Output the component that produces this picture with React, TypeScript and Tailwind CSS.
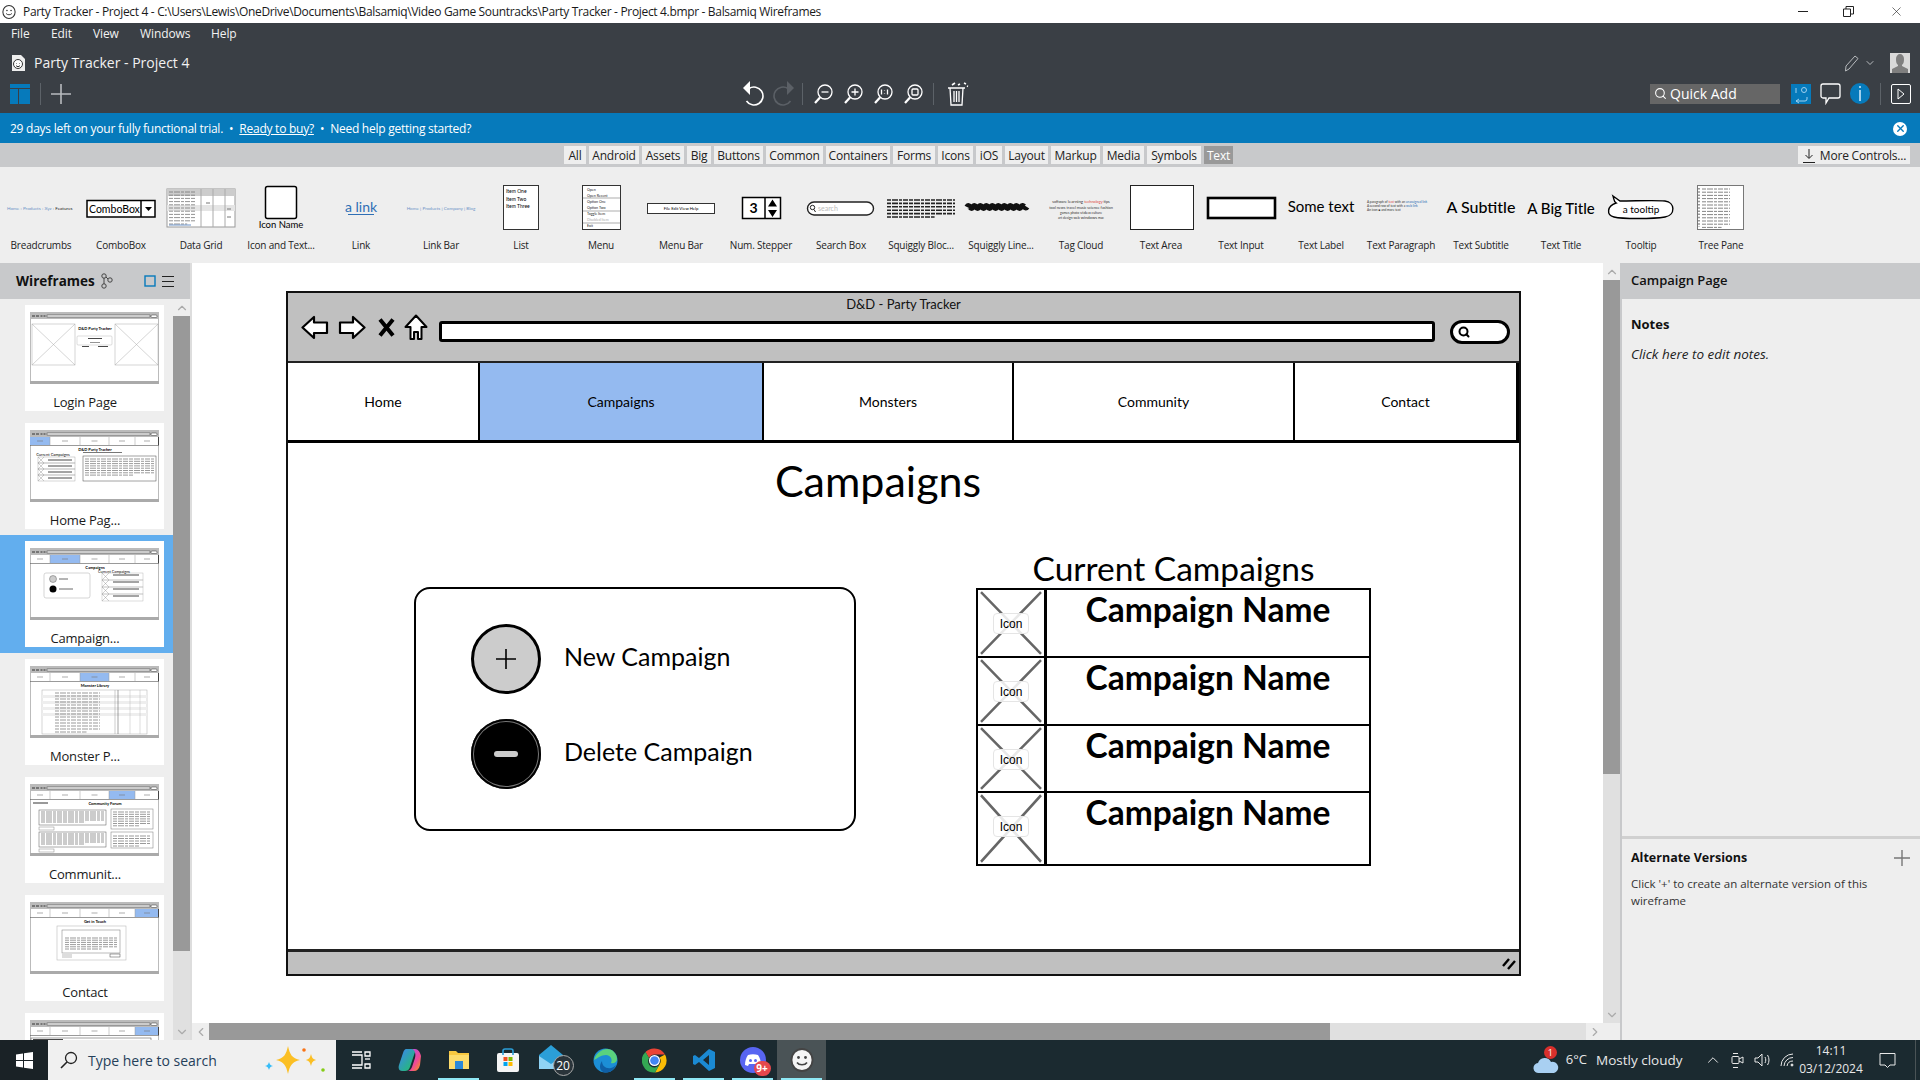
import type { ReactNode } from "react";
import { ChevronDown, ChevronLeft, ChevronRight, ChevronUp, Search, X } from "lucide-react";

const tabs = [
  { label: "All", w: "w-[22px]" },
  { label: "Android", w: "w-[50px]" },
  { label: "Assets", w: "w-[42px]" },
  { label: "Big", w: "w-[24px]" },
  { label: "Buttons", w: "w-[49px]" },
  { label: "Common", w: "w-[57px]" },
  { label: "Containers", w: "w-[64px]" },
  { label: "Forms", w: "w-[42px]" },
  { label: "Icons", w: "w-[35px]" },
  { label: "iOS", w: "w-[26px]" },
  { label: "Layout", w: "w-[43px]" },
  { label: "Markup", w: "w-[49px]" },
  { label: "Media", w: "w-[41px]" },
  { label: "Symbols", w: "w-[54px]" },
];

const library = [
  "Breadcrumbs", "ComboBox", "Data Grid", "Icon and Text...", "Link", "Link Bar", "List", "Menu", "Menu Bar", "Num. Stepper", "Search Box",
  "Squiggly Bloc...", "Squiggly Line...", "Tag Cloud", "Text Area", "Text Input", "Text Label", "Text Paragraph", "Text Subtitle", "Text Title", "Tooltip", "Tree Pane",
];

// the seventh page is cut off by the taskbar before its name shows
const pages = ["Login Page", "Home Pag...", "Campaign...", "Monster P...", "Communit...", "Contact", ""];

function Dashes({ x, y, w, n = 5, gap = 3, h = 1, color = "#333" }: { x: number; y: number; w: number; n?: number; gap?: number; h?: number; color?: string }) {
  return (
    <g>
      {Array.from({ length: n }, (_, i) => (
        <line key={i} x1={x} x2={i === n - 1 ? x + w * 0.7 : x + w} y1={y + i * gap} y2={y + i * gap} stroke={color} strokeWidth={h} strokeDasharray="4 1 6 1 3 1 5 1" />
      ))}
    </g>
  );
}

function LibraryPreview({ index }: { index: number }) {
  const f = { fontFamily: "Lato, sans-serif" };
  switch (index) {
    case 0:
      return (
        <text x="6" y="43" fontSize="4.6" fill="#6d93c7" style={f}>
          Home › Products › Xyz › <tspan fill="#222">Features</tspan>
        </text>
      );
    case 1:
      return (
        <g>
          <rect x="6" y="33.5" width="68" height="16.5" fill="white" stroke="black" strokeWidth="1.5" />
          <line x1="60" x2="60" y1="33" y2="50" stroke="black" strokeWidth="1.5" />
          <path d="M64 40h7l-3.5 4z" />
          <text x="8" y="45.5" fontSize="10.5" style={f}>ComboBox</text>
        </g>
      );
    case 2:
      return (
        <g>
          <rect x="6" y="22" width="68" height="38" fill="#fff" stroke="#999" />
          <rect x="6" y="38" width="68" height="6" fill="#e5e5e5" />
          <rect x="6" y="22" width="68" height="7" fill="#ccc" />
          <Dashes x={8} y={25} w={26} n={11} gap={3.2} color="#777" h={0.8} />
          {[40, 52, 64].map((x) => <line key={x} x1={x} x2={x} y1="22" y2="60" stroke="#aaa" />)}
          <line x1="45" x2="49" y1="36" y2="36" stroke="#777" />
          <line x1="66" x2="70" y1="42" y2="42" stroke="#777" />
          <line x1="66" x2="70" y1="50" y2="50" stroke="#777" />
          <line x1="8" x2="30" y1="58" y2="58" stroke="#6d93c7" />
        </g>
      );
    case 3:
      return (
        <g>
          <rect x="24.5" y="19.5" width="31" height="32" rx="2" fill="white" stroke="black" strokeWidth="1.5" />
          <text x="40" y="61" textAnchor="middle" fontSize="9.5" style={f}>Icon Name</text>
        </g>
      );
    case 4:
      return (
        <g>
          <text x="40" y="45" textAnchor="middle" fontSize="14" fill="#2f6fb5" style={f}>a link</text>
          <line x1="27" x2="53" y1="47.5" y2="47.5" stroke="#2f6fb5" />
        </g>
      );
    case 5:
      return (
        <text x="40" y="43" textAnchor="middle" fontSize="4.6" fill="#6d93c7" style={f}>
          Home | Products | Company | Blog
        </text>
      );
    case 6:
      return (
        <g>
          <rect x="22.5" y="18.5" width="35" height="44" fill="white" stroke="#333" />
          <text x="25" y="26" fontSize="5" style={f}>Item One</text>
          <text x="25" y="33.5" fontSize="5" style={f}>Item Two</text>
          <text x="25" y="41" fontSize="5" style={f}>Item Three</text>
        </g>
      );
    case 7:
      return (
        <g>
          <rect x="21.5" y="18.5" width="38" height="44" fill="white" stroke="#333" />
          {["Open", "Open Recent", "Option One", "Option Two", "Toggle Item", "Disabled Item", "Exit"].map((t, i) => (
            <text key={t} x="26" y={23.5 + i * 6} fontSize="3.6" fill={i === 5 ? "#aaa" : "#222"} style={f}>{t}</text>
          ))}
          <line x1="22" x2="59" y1="31" y2="31" stroke="#777" strokeWidth="0.6" />
          <line x1="22" x2="59" y1="44" y2="44" stroke="#777" strokeWidth="0.6" />
          <line x1="22" x2="59" y1="56" y2="56" stroke="#777" strokeWidth="0.6" />
        </g>
      );
    case 8:
      return (
        <g>
          <rect x="6.5" y="36.5" width="67" height="10" fill="white" stroke="#333" />
          <text x="40" y="43" textAnchor="middle" fontSize="4.2" style={f}>File   Edit   View   Help</text>
        </g>
      );
    case 9:
      return (
        <g>
          <rect x="21.5" y="30.5" width="38" height="21" fill="white" stroke="black" strokeWidth="1.5" />
          <line x1="44" x2="44" y1="30" y2="52" stroke="black" strokeWidth="1.5" />
          <text x="32.5" y="46" textAnchor="middle" fontSize="14" fontWeight="700" style={f}>3</text>
          <path d="M51.5 32.5l4.5 7h-9zM51.5 50l4.5-7h-9z" />
        </g>
      );
    case 10:
      return (
        <g>
          <rect x="6.5" y="35" width="66" height="13" rx="6.5" fill="white" stroke="#222" strokeWidth="1.4" />
          <circle cx="11.5" cy="40.5" r="2.2" fill="none" stroke="#222" />
          <line x1="13" x2="14.5" y1="42.5" y2="45" stroke="#222" />
          <text x="17" y="43.5" fontSize="7" fill="#bbb" style={f}>search</text>
        </g>
      );
    case 11:
      return <Dashes x={6} y={33} w={68} n={6} gap={3.4} h={1.6} color="#222" />;
    case 12:
      return <path d="M6 40c2-4 4 4 6 0s4 4 6 0 4 4 6 0 4 4 6 0 4 4 6 0 4 4 6 0 4 4 6 0 4 4 6 0 4 4 6 0 4 3 6 0" fill="none" stroke="#111" strokeWidth="5.500" />;
    case 13:
      return (
        <g fill="#333" style={f}>
          <text x="40" y="36" textAnchor="middle" fontSize="3.8">software <tspan fontSize="4.4">learning</tspan> <tspan fill="#d44">technology</tspan> tips</text>
          <text x="40" y="42" textAnchor="middle" fontSize="3.8">tool news travel music science fashion</text>
          <text x="40" y="47" textAnchor="middle" fontSize="3.4">games photo <tspan fontSize="4.4">video</tspan> culture</text>
          <text x="40" y="52" textAnchor="middle" fontSize="3.4">art design web <tspan fontSize="4.2">windows</tspan> mac</text>
        </g>
      );
    case 14:
      return <rect x="9.5" y="18.5" width="63" height="44" fill="white" stroke="#222" />;
    case 15:
      return <rect x="7" y="31" width="67" height="20" fill="white" stroke="black" strokeWidth="2.6" />;
    case 16:
      return <text x="40" y="45" textAnchor="middle" fontSize="15" style={f}>Some text</text>;
    case 17:
      return (
        <g fill="#333" style={f} fontSize="3.2">
          <text x="6" y="36">A paragraph of <tspan fill="#d44">text</tspan> with an <tspan fill="#2f6fb5">unassigned link</tspan></text>
          <text x="6" y="40">A second row of text with a <tspan fill="#2f6fb5">web link</tspan></text>
          <text x="6" y="44">An icon ■ and more text</text>
        </g>
      );
    case 18:
      return <text x="40" y="45.500" textAnchor="middle" fontSize="16" fontWeight="500" style={f}>A Subtitle</text>;
    case 19:
      return <text x="40" y="46.500" textAnchor="middle" fontSize="15" fontWeight="500" style={f}>A Big Title</text>;
    case 20:
      return (
        <g>
          <path d="M15 36c-2-1-2-4-3-7l7 5c15 0 35-1 45 0 10 1 11 14 0 16-12 2-43 2-51 0-8-2-7-11 2-14z" fill="white" stroke="black" strokeWidth="1.4" />
          <text x="40" y="46" textAnchor="middle" fontSize="10" style={f}>a tooltip</text>
        </g>
      );
    default:
      return (
        <g>
          <rect x="16.5" y="18.5" width="46" height="44" fill="white" stroke="#777" />
          <Dashes x={21} y={22} w={28} n={13} gap={3.2} h={0.8} color="#666" />
          <line x1="18" x2="18" y1="21" y2="60" stroke="#999" strokeDasharray="1.5 1.7" strokeWidth="2" />
        </g>
      );
  }
}

function ThumbLines({ x, y, w, n, gap = 2 }: { x: number; y: number; w: number; n: number; gap?: number }) {
  return <Dashes x={x} y={y} w={w} n={n} gap={gap} h={0.6} color="#555" />;
}

function PageThumb({ index }: { index: number }) {
  const active = index === 0 ? -1 : index === 1 ? 0 : index === 2 ? 1 : index === 3 ? 2 : index === 4 ? 3 : 4;
  const cols = [0, 20, 50, 79, 105, 129];
  const f = { fontFamily: "Lato, sans-serif" };
  return (
    <svg viewBox="0 0 129 72" className="w-[129px] h-[72px] block mx-auto">
      <rect width="129" height="72" fill="white" />
      <rect width="129" height="7" fill="#bbb" />
      <rect x="17" y="3" width="103" height="2" fill="white" stroke="#333" strokeWidth="0.5" />
      <rect x="121" y="3" width="6" height="2.5" rx="1" fill="white" stroke="#333" strokeWidth="0.5" />
      <path d="M2 4h3M6 4h3M10.5 4h2M13.5 4h2" stroke="#333" />
      <rect y="69" width="129" height="3" fill="#aaa" />
      <path d="M.5 7V69M128.5 7V69" stroke="#bbb" />
      {active >= 0 && (
        <g>
          <rect x={cols[active]} y="7" width={cols[active + 1] - cols[active]} height="8" fill="#94baf0" />
          {cols.slice(1, 5).map((x) => <line key={x} x1={x} x2={x} y1="7" y2="15" stroke="#999" strokeWidth="0.5" />)}
          <line x2="129" y1="15.5" y2="15.5" stroke="#555" strokeWidth="0.6" />
          <line x1="128.5" x2="128.5" y1="7" y2="15" stroke="#444" />
          {cols.slice(0, 5).map((x, i) => <line key={x} x1={(x + cols[i + 1]) / 2 - 3} x2={(x + cols[i + 1]) / 2 + 3} y1="11" y2="11" stroke="#777" strokeWidth="0.6" />)}
        </g>
      )}
      {index === 0 && (
        <g>
          {[2, 85].map((x) => (
            <g key={x} stroke="#aaa" strokeWidth="0.5" fill="none">
              <rect x={x} y="12" width="43" height="41" />
              <path d={`M${x} 12l43 41M${x + 43} 12l-43 41`} />
            </g>
          ))}
          <text x="65" y="18" textAnchor="middle" fontSize="4" fontWeight="700" style={f}>D&amp;D Party Tracker</text>
          <rect x="47" y="24" width="35" height="9" rx="1" fill="none" stroke="#bbb" strokeWidth="0.5" />
          <line x1="58" x2="72" y1="26.5" y2="26.5" stroke="#333" strokeWidth="0.9" />
          <line x1="60" x2="70" y1="30.5" y2="30.5" stroke="#666" strokeWidth="0.7" />
          <line x1="52" x2="59" y1="34.500" y2="34.500" stroke="#333" strokeWidth="0.9" />
          <line x1="68" x2="78" y1="34.500" y2="34.500" stroke="#333" strokeWidth="0.9" />
        </g>
      )}
      {index === 1 && (
        <g>
          <text x="65" y="21" textAnchor="middle" fontSize="4" fontWeight="700" style={f}>D&amp;D Party Tracker</text>
          <text x="23" y="26" textAnchor="middle" fontSize="4" style={f}>Current Campaigns</text>
          {[0, 1, 2, 3].map((i) => (
            <g key={i}>
              <rect x="8" y={27 + i * 6} width="37" height="6" fill="none" stroke="#999" strokeWidth="0.4" />
              <path d={`M8 ${27 + i * 6}l6 6M14 ${27 + i * 6}l-6 6`} stroke="#888" strokeWidth="0.4" />
              <line x1="18" x2="42" y1={30 + i * 6} y2={30 + i * 6} stroke="#333" strokeWidth="0.9" />
            </g>
          ))}
          <rect x="53" y="26" width="73" height="25" fill="none" stroke="#444" strokeWidth="0.5" />
          <line x1="53" x2="92" y1="22.5" y2="22.5" stroke="#777" strokeWidth="1" />
          <ThumbLines x={55} y={29} w={69} n={8} gap={2.3} />
        </g>
      )}
      {index === 2 && (
        <g>
          <text x="65" y="21" textAnchor="middle" fontSize="4" fontWeight="700" style={f}>Campaigns</text>
          <rect x="14" y="25" width="46" height="25" rx="2" fill="none" stroke="#bbb" strokeWidth="0.6" />
          <circle cx="23" cy="31" r="3.5" fill="#ccc" stroke="#444" strokeWidth="0.4" />
          <circle cx="23" cy="41" r="3.5" fill="black" />
          <line x1="29" x2="38" y1="31" y2="31" stroke="#444" strokeWidth="0.8" />
          <line x1="29" x2="43" y1="41" y2="41" stroke="#444" strokeWidth="0.8" />
          <text x="84" y="24.5" textAnchor="middle" fontSize="3.8" style={f}>Current Campaigns</text>
          {[0, 1, 2, 3].map((i) => (
            <g key={i}>
              <rect x="72" y={25 + i * 7} width="41" height="7" fill="none" stroke="#aaa" strokeWidth="0.4" />
              <path d={`M72 ${25 + i * 7}l7 7M79 ${25 + i * 7}l-7 7`} stroke="#888" strokeWidth="0.4" />
              <line x1="83" x2="109" y1={27 + i * 7} y2={27 + i * 7} stroke="#333" strokeWidth="0.9" />
            </g>
          ))}
        </g>
      )}
      {index === 3 && (
        <g>
          <text x="65" y="21" textAnchor="middle" fontSize="4" fontWeight="700" style={f}>Monster Library</text>
          <rect x="12" y="24" width="105" height="44" fill="white" stroke="#aaa" strokeWidth="0.5" />
          {[0, 1, 2, 3].map((i) => <rect key={i} x="12" y={29 + i * 6} width="105" height="3" fill="#eee" />)}
          <ThumbLines x={25} y={27} w={45} n={14} gap={3} />
          {[85, 88].map((x) => <line key={x} x1={x} x2={x} y1="24" y2="68" stroke={x === 85 ? "#999" : "#444"} strokeWidth="0.5" />)}
          {[100, 110].map((x) => <line key={x} x1={x} x2={x} y1="24" y2="68" stroke="#bbb" strokeWidth="0.5" />)}
        </g>
      )}
      {index === 4 && (
        <g>
          <text x="75" y="20.5" textAnchor="middle" fontSize="4" fontWeight="700" style={f}>Community Forum</text>
          <rect x="3" y="18" width="15" height="2" fill="#999" />
          {[0, 1].map((i) => (
            <g key={i}>
              <rect x="9" y={26 + i * 22} width="67" height="15" fill="none" stroke="#555" strokeWidth="0.5" />
              <ThumbLines x={11} y={28 + i * 22} w={63} n={6} gap={2} />
              <rect x="9" y={43 + i * 22} width="15" height="3" fill="none" stroke="#888" strokeWidth="0.5" />
            </g>
          ))}
          <rect x="81" y="25" width="42" height="20" fill="none" stroke="#777" strokeWidth="0.5" />
          <ThumbLines x={83} y={28} w={38} n={7} gap={2.3} />
          <rect x="81" y="48" width="42" height="16" fill="none" stroke="#777" strokeWidth="0.5" />
          <ThumbLines x={83} y={52} w={38} n={5} gap={2.5} />
        </g>
      )}
      {index === 5 && (
        <g>
          <text x="65" y="21" textAnchor="middle" fontSize="4" fontWeight="700" style={f}>Get in Touch</text>
          <rect x="27" y="24" width="69" height="34" fill="none" stroke="#bbb" strokeWidth="0.6" />
          <rect x="32" y="28" width="58" height="23" fill="none" stroke="#777" strokeWidth="0.5" />
          <ThumbLines x={35} y={36} w={52} n={6} gap={2.2} />
          <rect x="32" y="52" width="10" height="4" fill="#ddd" />
          <rect x="80" y="52" width="10" height="3" fill="none" stroke="#444" strokeWidth="0.5" />
        </g>
      )}
      {index === 6 && (
        <g>
          <rect x="1" y="18" width="120" height="20" fill="none" stroke="#444" strokeWidth="0.5" />
          <line x1="3" x2="33" y1="19.5" y2="19.5" stroke="#333" strokeWidth="0.9" />
        </g>
      )}
    </svg>
  );
}

function Magnifier({ children, dim }: { children?: ReactNode; dim?: boolean }) {
  return (
    <svg width="21" height="20" viewBox="0 0 21 20" fill="none" stroke={dim ? "#777" : "white"} strokeWidth="1.3">
      <circle cx="12" cy="8" r="7" />
      {children}
      <path d="M7 13.5L2 19" strokeWidth="2.2" />
    </svg>
  );
}

function TrayBar() {
  return <span className="block w-px h-[22px] bg-[#5c6268]" />;
}

function MainToolbar() {
  return (
    <div className="h-[33px] pb-[6px] flex items-center">
      <svg width="20" height="20" viewBox="0 0 20 20" className="ml-[10px]">
        <rect width="20" height="20" fill="#067abb" />
        <rect x="0" y="4" width="20" height="1" fill="#3a3f45" />
        <rect x="8" y="5" width="1" height="15" fill="#3a3f45" />
      </svg>
      <span className="w-px h-[22px] bg-[#5c6268] ml-[10px]" />
      <svg width="22" height="22" viewBox="0 0 22 22" stroke="#b8bbbe" strokeWidth="1.6" className="ml-[9px]">
        <path d="M11 1V21M1 11H21" />
      </svg>
      <svg width="22" height="25" viewBox="0 0 22 25" fill="none" className="ml-[670px]">
        <path d="M7 7.5A9 9 0 1 1 4.5 20" stroke="white" strokeWidth="1.6" />
        <path d="M8 0v14L1 7z" fill="white" />
      </svg>
      <svg width="22" height="25" viewBox="0 0 22 25" fill="none" className="ml-[9px]">
        <path d="M15 7.5A9 9 0 1 0 17.5 20" stroke="#5b6066" strokeWidth="1.6" />
        <path d="M14 0v14l7-7z" fill="#5b6066" />
      </svg>
      <span className="ml-[7px]"><TrayBar /></span>
      <span className="ml-[10px] flex gap-[9px]">
        <Magnifier><path d="M8.5 8h7" /></Magnifier>
        <Magnifier><path d="M8.5 8h7M12 4.5v7" /></Magnifier>
        <Magnifier><path d="M8.5 5.5v5M11.5 6.5v.5M11.5 9v.5M14.5 5.5v5" /></Magnifier>
        <Magnifier><rect x="9" y="5" width="6" height="6" rx="1" /></Magnifier>
      </span>
      <span className="ml-[9px]"><TrayBar /></span>
      <svg width="24" height="24" viewBox="0 0 24 24" fill="none" stroke="white" strokeWidth="1.3" className="ml-[11px]">
        <path d="M3 6H20M5 6L6 23H17L18 6M9 9V20M11.5 9V20M14 9V20" />
        <path d="M7 3l3-2M13 3l2-1M19 1l2 1M22 4l1 .5" strokeWidth="1.6" />
      </svg>
      <div className="ml-[681px] w-[130px] h-[20px] bg-[#666666] flex items-center pl-[4px] gap-[3px] text-white text-[14px]">
        <Search size={13} strokeWidth={2} />
        <span>Quick Add</span>
      </div>
      <svg width="20" height="20" viewBox="0 0 20 20" className="ml-[11px]" fill="none" stroke="#9fd0ee">
        <rect width="20" height="20" fill="#067abb" stroke="none" />
        <circle cx="13" cy="6" r="2.5" />
        <path d="M5 4v5M16 13v2a2 2 0 0 1-2 2H5M8 15l-3 2 3 2" />
      </svg>
      <svg width="21" height="22" viewBox="0 0 21 22" fill="none" stroke="white" strokeWidth="1.3" className="ml-[9px]">
        <path d="M3 1H18a2 2 0 0 1 2 2V13a2 2 0 0 1-2 2H9L6 20V15H3a2 2 0 0 1-2-2V3a2 2 0 0 1 2-2z" />
      </svg>
      <span className="ml-[9px] w-[20px] h-[21px] rounded-full bg-[#067abb] text-[#9fd0ee] flex items-center justify-center">
        <svg width="4" height="15" viewBox="0 0 4 15" fill="currentColor"><rect x="1" y="0" width="2" height="2" /><rect x="1" y="4" width="2" height="11" /></svg>
      </span>
      <span className="ml-[10px]"><TrayBar /></span>
      <span className="ml-[10px] w-[20px] h-[20px] rounded-[2px] border border-white flex items-center justify-center">
        <svg width="8" height="12" viewBox="0 0 8 12" fill="none" stroke="white"><path d="M1 1l6 5-6 5z" /></svg>
      </span>
    </div>
  );
}

function TopChrome() {
  return (
    <>
      <div className="h-[23px] bg-white flex items-center text-[12px] text-[#1a1a1a]">
        <Smiley className="ml-[2px]" size={14} stroke="#333" fill="#fff" />
        <span className="ml-[7px] tracking-[-0.33px] whitespace-nowrap">Party Tracker - Project 4 - C:\Users\Lewis\OneDrive\Documents\Balsamiq\Video Game Sountracks\Party Tracker - Project 4.bmpr - Balsamiq Wireframes</span>
        <svg width="10" height="1" className="ml-auto"><rect width="10" height="1" fill="#222" /></svg>
        <svg width="11" height="11" viewBox="0 0 11 11" fill="none" stroke="#222" className="ml-[35px]">
          <path d="M.5 3h7v7.5h-7zM3 3V.5h7.5V8H8" />
        </svg>
        <X size={15} strokeWidth={1} className="ml-[35px] mr-[16px] text-[#222]" />
      </div>
      <div className="h-[90px] bg-[#3a3f45] text-white">
        <div className="h-[22px] flex items-center text-[12px] pl-[11px] gap-[19px] text-[#f2f2f2] tracking-[-0.1px]">
          <span className="w-[21px]">File</span>
          <span className="w-[23px]">Edit</span>
          <span className="w-[28px]">View</span>
          <span className="w-[52px]">Windows</span>
          <span>Help</span>
        </div>
        <div className="h-[35px] flex items-center">
          <svg width="14" height="16" viewBox="0 0 14 16" className="ml-[11px]">
            <path d="M1 0H10L14 4V16H1z" fill="#eee" />
            <circle cx="7" cy="9" r="4.5" fill="#fff" stroke="#333" />
            <path d="M5 8.5h.5M8.5 8.5H9M5 10.5c1 1.5 3 1.5 4 0" stroke="#333" fill="none" />
          </svg>
          <span className="ml-[9px] text-[14px] text-[#f2f2f2]">Party Tracker - Project 4</span>
          <svg width="18" height="18" viewBox="0 0 18 18" fill="none" stroke="#b8bbbe" className="ml-auto">
            <path d="M2 12L11 2l3 2.5L5 15l-3.5 2z" />
          </svg>
          <ChevronDown size={12} className="ml-[2px] text-[#b8bbbe]" />
          <svg width="20" height="20" viewBox="0 0 20 20" className="ml-[14px] mr-[10px]">
            <rect width="20" height="20" fill="#d9d9d9" />
            <path d="M6 6a4 5 0 0 1 8 0c0 4-1 5-2 6v1l6 3v4H2v-4l6-3v-1c-1-1-2-2-2-6z" fill="#7f7f7f" />
          </svg>
        </div>
        <MainToolbar />
      </div>
      <div className="h-[30px] pt-px bg-[#067abb] text-white text-[12px] flex items-center pl-[10px] tracking-[-0.25px]">
        <span>29 days left on your fully functional trial.</span>
        <span className="mx-[6px]">•</span>
        <span className="underline">Ready to buy?</span>
        <span className="mx-[6px]">•</span>
        <span>Need help getting started?</span>
        <span className="ml-auto mr-[13px] w-[14px] h-[14px] rounded-full bg-white flex items-center justify-center text-[#067abb]">
          <X size={11} strokeWidth={3} />
        </span>
      </div>
      <div className="h-[24px] bg-[#c8c9cb] flex items-center text-[12px] text-[#222] tracking-[-0.2px]">
        <div className="ml-[564px] flex gap-[3px]">
          {tabs.map((t) => (
            <span key={t.label} className={`${t.w} h-[18px] pt-px bg-[#eeeeee] flex items-center justify-center`}>{t.label}</span>
          ))}
          <span className="w-[29px] h-[18px] pt-px bg-[#999999] text-white flex items-center justify-center">Text</span>
        </div>
        <span className="ml-auto mr-[10px] w-[112px] h-[18px] pt-px bg-[#eeeeee] flex items-center justify-center gap-[4px]">
          <svg width="14" height="14" viewBox="0 0 14 14" fill="none" stroke="#222"><path d="M7 0v9M3.5 6L7 9.5 10.5 6M1 13.5H13" /></svg>
          More Controls...
        </span>
      </div>
      <div className="h-[96px] bg-[#eeeeee] pl-[1px] flex">
        {library.map((item, i) => (
          <div key={item} className="w-[80px] h-[96px] flex flex-col items-center">
            <svg viewBox="0 0 80 68" className="w-[80px] h-[68px] block"><LibraryPreview index={i} /></svg>
            <span className="mt-[2px] text-[10px] tracking-[-0.2px] leading-[16px] text-[#222] whitespace-nowrap">{item}</span>
          </div>
        ))}
      </div>
    </>
  );
}

function Smiley({ className, size, stroke, fill }: { className?: string; size: number; stroke: string; fill: string }) {
  return (
    <svg width={size} height={size} viewBox="0 0 24 24" className={className}>
      <ellipse cx="12" cy="12" rx="10.5" ry="11" fill={fill} stroke={stroke} strokeWidth="1.8" />
      <circle cx="8.5" cy="9.5" r="1.4" fill={stroke} />
      <circle cx="15.5" cy="9.5" r="1.4" fill={stroke} />
      <path d="M7 14.5c2 3 8 3 10 0" fill="none" stroke={stroke} strokeWidth="1.6" />
    </svg>
  );
}

function LeftPanel() {
  return (
    <div className="w-[192px] flex flex-col border-r-2 border-[#dddddd] bg-[#eeeeee]">
      <div className="h-[36px] bg-[#c8c9cb] flex items-center pl-[16px]">
        <span className="text-[13.5px] font-bold text-[#111]">Wireframes</span>
        <svg width="16" height="16" viewBox="0 0 16 16" fill="none" stroke="#444" className="ml-[5px]">
          <circle cx="4" cy="3" r="2.2" /><circle cx="4" cy="13" r="2.2" /><circle cx="10" cy="7" r="2.2" />
          <path d="M4 5v6M6 4l2 2" />
        </svg>
        <svg width="12" height="12" className="ml-[28px]" fill="none" stroke="#067abb" strokeWidth="1.4"><rect x="1" y="1" width="10" height="10" /></svg>
        <svg width="12" height="12" className="ml-[6px]" stroke="#222"><path d="M0 1.5H12M0 6.5H12M0 11.5H12" /></svg>
      </div>
      <div className="flex-1 min-h-0 flex">
        <div className="w-[173px] overflow-hidden">
          {pages.map((p, i) => (
            <div key={i} className={`h-[118px] py-[6px] pl-[25px] ${i === 2 ? "bg-[#62aeee]" : ""}`}>
              <div className="w-[139px] h-[106px] bg-white pt-[7px]">
                <PageThumb index={i} />
                {p && <div className="w-[120px] text-center text-[13px] tracking-[-0.2px] leading-[20px] mt-[8px] text-[#1a1a1a]">{p}</div>}
              </div>
            </div>
          ))}
        </div>
        <div className="w-[17px] flex flex-col bg-[#e0e0e0]">
          <div className="h-[17px] bg-[#eeeeee] flex items-center justify-center text-[#aaa]"><ChevronUp size={14} /></div>
          <div className="h-[635px] bg-[#999999]" />
          <div className="flex-1" />
          <div className="h-[17px] flex items-center justify-center text-[#aaa]"><ChevronDown size={14} /></div>
        </div>
      </div>
    </div>
  );
}

function BrowserIcons() {
  return (
    <div className="flex items-center pl-[13px] shrink-0 -mt-[8px]">
      <svg width="28" height="25" viewBox="0 0 28 25" fill="white" stroke="black" strokeWidth="2.2">
        <path d="M1.5 12.5L13 2V7.5H26V18H13V23z" strokeLinejoin="round" />
      </svg>
      <svg width="28" height="25" viewBox="0 0 28 25" fill="white" stroke="black" strokeWidth="2.2" className="ml-[9px]">
        <path d="M26.5 12.5L15 2V7.5H2V18H15V23z" strokeLinejoin="round" />
      </svg>
      <svg width="17" height="19" viewBox="0 0 17 19" className="ml-[12px]" stroke="black" strokeWidth="4"><path d="M2 1.5L15 17.5M15 1.5L2 17.5" /></svg>
      <svg width="24" height="27" viewBox="0 0 24 27" fill="white" stroke="black" strokeWidth="2" className="ml-[9px]">
        <path d="M12 1.5L22.5 13H17.5V25H14V18H10V25H6.5V13H1.5z" strokeLinejoin="round" />
      </svg>
    </div>
  );
}

function CampaignRow({ h }: { h: string }) {
  return (
    <div className={`${h} flex border-2 border-black -mt-[2px]`}>
      <div className="relative w-[69px] border-r-[3px] border-black shrink-0">
        <svg className="block w-full h-full" viewBox="0 0 66 64" preserveAspectRatio="none" stroke="#666" strokeWidth="2.5">
          <path d="M3 2L63 62M63 2L3 62" />
        </svg>
        <span className="absolute left-[15px] top-[23px] w-[36px] h-[21px] bg-white/85 border border-[#e5e5e5] rounded-[4px] text-[12px] flex items-center justify-center font-['Liberation_Sans',sans-serif]">Icon</span>
      </div>
      <div className="flex-1 text-center text-[33.5px] leading-[38px] font-bold text-black">Campaign Name</div>
    </div>
  );
}

function ActionRow({ label, dark }: { label: string; dark?: boolean }) {
  return (
    <div className="flex items-center">
      {dark ? (
        <div className="w-[70px] h-[70px] rounded-full bg-black flex items-center justify-center shadow-[inset_0_0_0_2px_#000,inset_0_0_0_3px_#777]">
          <span className="w-[24px] h-[6px] rounded-full bg-[#cccccc]" />
        </div>
      ) : (
        <div className="w-[70px] h-[70px] rounded-full bg-[#cccccc] border-[3px] border-black flex items-center justify-center">
          <svg width="20" height="20" stroke="black" strokeWidth="1.6"><path d="M10 0V20M0 10H20" /></svg>
        </div>
      )}
      <span className="ml-[23px] text-[25px] leading-[32px] text-black -mt-[6px]">{label}</span>
    </div>
  );
}

function WireframeWindow() {
  const navs = [
    { label: "Home", w: "w-[192px]" },
    { label: "Campaigns", w: "w-[284px] bg-[#94baf0]" },
    { label: "Monsters", w: "w-[250px]" },
    { label: "Community", w: "w-[281px]" },
    { label: "Contact", w: "flex-1" },
  ];
  return (
    <div className="w-[1235px] h-[685px] ml-[94px] mt-[28px] border-[2px] border-[#111] flex flex-col bg-white font-['Lato',sans-serif]">
      <div className="h-[70px] bg-[#c0c0c0] border-b-[2px] border-[#222] flex flex-col shrink-0">
        <div className="h-[25px] text-center text-[13px] leading-[22px] text-[#111]">D&amp;D - Party Tracker</div>
        <div className="flex items-center h-[27px]">
          <BrowserIcons />
          <div className="ml-[11px] w-[996px] h-[21px] bg-white border-[3px] border-black rounded-[3px]" />
          <div className="ml-[15px] w-[60px] h-[24px] bg-white border-[3px] border-black rounded-[12px] flex items-center pl-[5px]">
            <Search size={12} strokeWidth={4} className="text-black" />
          </div>
        </div>
      </div>
      <div className="h-[80px] shrink-0 flex border-b-[3px] border-r-[3px] border-black">
        {navs.map((n) => (
          <div key={n.label} className={`${n.w} flex items-center justify-center border-r-2 border-black last:border-r-0 text-[14px] text-black`}>{n.label}</div>
        ))}
      </div>
      <div className="flex-1 min-h-0">
        <div className="h-[78px] pt-[13px] w-[1180px] text-center text-[43px] leading-[50px] text-black">Campaigns</div>
        <div className="flex items-start pt-[28px]">
          <div className="ml-[126px] mt-[38px] w-[442px] h-[244px] border-2 border-black rounded-[16px] pl-[55px] pt-[35px] flex flex-col gap-[25px]">
            <ActionRow label="New Campaign" />
            <ActionRow label="Delete Campaign" dark />
          </div>
          <div className="ml-[120px] w-[395px]">
            <div className="h-[41px] text-center text-[33.5px] leading-[38px] text-black">Current Campaigns</div>
            <CampaignRow h="h-[70px]" />
            <CampaignRow h="h-[70px]" />
            <CampaignRow h="h-[69px]" />
            <CampaignRow h="h-[75px]" />
          </div>
        </div>
      </div>
      <div className="h-[25px] shrink-0 bg-[#c0c0c0] border-t-[3px] border-[#222] flex items-center justify-end pr-[3px]">
        <svg width="14" height="13" viewBox="0 0 14 13" stroke="black" strokeWidth="2.4"><path d="M1 9L7 2M6 12L13 4" /></svg>
      </div>
    </div>
  );
}

function Canvas() {
  return (
    <div className="w-[1428px] flex flex-col">
      <div className="flex-1 min-h-0 flex">
        <div className="w-[1411px] bg-white overflow-hidden">
          <WireframeWindow />
        </div>
        <div className="w-[17px] flex flex-col bg-[#e0e0e0]">
          <div className="h-[17px] bg-[#eeeeee] flex items-center justify-center text-[#aaa]"><ChevronUp size={14} /></div>
          <div className="h-[494px] bg-[#999999]" />
          <div className="flex-1" />
          <div className="h-[17px] flex items-center justify-center text-[#aaa]"><ChevronDown size={14} /></div>
        </div>
      </div>
      <div className="h-[17px] flex bg-[#e0e0e0] shrink-0">
        <div className="w-[17px] bg-[#eeeeee] flex items-center justify-center text-[#aaa]"><ChevronLeft size={14} /></div>
        <div className="w-[1121px] bg-[#999999]" />
        <div className="flex-1" />
        <div className="w-[17px] bg-[#eeeeee] flex items-center justify-center text-[#aaa]"><ChevronRight size={14} /></div>
        <div className="w-[17px] bg-[#eeeeee]" />
      </div>
    </div>
  );
}

function RightPanel() {
  return (
    <div className="w-[300px] flex flex-col bg-[#eeeeee] border-l-2 border-[#c8c9cb]">
      <div className="h-[36px] bg-[#c8c9cb] -ml-[2px] pl-[11px] flex items-center text-[13px] font-semibold text-[#111]">Campaign Page</div>
      <div className="h-[540px] border-b-[3px] border-[#d0d0d0] pl-[9px]">
        <div className="mt-[16px] text-[13px] font-bold leading-[18px] text-[#111]">Notes</div>
        <div className="mt-[12px] text-[13.5px] italic leading-[18px] text-[#222]">Click here to edit notes.</div>
      </div>
      <div className="pl-[9px] pr-[10px] pt-[10px]">
        <div className="flex items-center justify-between">
          <span className="text-[12.5px] font-bold leading-[18px] text-[#111]">Alternate Versions</span>
          <svg width="16" height="16" stroke="#777" strokeWidth="1.4"><path d="M8 0V16M0 8H16" /></svg>
        </div>
        <div className="mt-[9px] text-[11.5px] leading-[16.5px] text-[#333] w-[270px]">Click '+' to create an alternate version of this wireframe</div>
      </div>
    </div>
  );
}

function TaskIcon({ children, on, active }: { children: ReactNode; on?: boolean; active?: boolean }) {
  return (
    <div className={`relative w-[49px] h-[40px] flex items-center justify-center ${active ? "bg-[#4a5356]" : ""}`}>
      {children}
      {on && <span className="absolute bottom-0 left-[4px] right-[4px] h-[2px] bg-[#8fe8f5]" />}
    </div>
  );
}

function Taskbar() {
  return (
    <div className="h-[40px] bg-[#1b2a30] flex items-center text-white shrink-0">
      <div className="w-[48px] h-[40px] bg-[#1a2226] flex items-center justify-center">
        <svg width="17" height="17" viewBox="0 0 17 17" fill="white"><path d="M0 2.5L7 1.5V8H0zM8 1.3L17 0V8H8zM0 9H7V15.5L0 14.5zM8 9H17V17L8 15.7z" /></svg>
      </div>
      <div className="w-[288px] h-[40px] bg-[#f0f0f0] flex items-center relative">
        <svg width="18" height="18" viewBox="0 0 18 18" fill="none" stroke="#222" strokeWidth="1.3" className="ml-[12px]">
          <circle cx="11" cy="7" r="5.5" /><path d="M7 11L1 17" strokeWidth="1.6" />
        </svg>
        <span className="ml-[10px] text-[14px] text-[#25405a] whitespace-nowrap">Type here to search</span>
        <svg width="70" height="36" viewBox="0 0 70 36" className="absolute left-[216px] top-[2px]">
          <path d="M24 4c2 9 4 12 12 14-8 2-10 5-12 14-2-9-4-12-12-14 8-2 10-5 12-14z" fill="#fbbf24" />
          <path d="M47 12c1 4 2 5 5 6-3 1-4 2-5 6-1-4-2-5-5-6 3-1 4-2 5-6z" fill="#fbbf24" />
          <path d="M5 20c.7 2.5 1.5 3.500 4 4-2.500.5-3.300 1.500-4 4-.7-2.500-1.500-3.500-4-4 2.500-.5 3.300-1.500 4-4z" fill="#38bdf8" />
          <circle cx="40" cy="8" r="1.800" fill="#f97316" />
          <circle cx="59" cy="28" r="1.800" fill="#84cc16" />
        </svg>
      </div>
      <div className="flex">
        <TaskIcon>
          <svg width="20" height="18" viewBox="0 0 20 18" fill="none" stroke="white" strokeWidth="1.300">
            <path d="M1 4H11V14H1M1 1H11M1 17H11" /><path d="M14 1H19V5H14zM14 13H19V17H14z" /><path d="M14 8H19" />
          </svg>
        </TaskIcon>
        <TaskIcon>
          <svg width="24" height="24" viewBox="0 0 24 24">
            <defs>
              <linearGradient id="cpA" x1="0" y1="0" x2="1" y2="1"><stop stopColor="#3b82f6" /><stop offset="1" stopColor="#22c55e" /></linearGradient>
              <linearGradient id="cpB" x1="0" y1="0" x2="1" y2="1"><stop stopColor="#a855f7" /><stop offset="0.6" stopColor="#ec4899" /><stop offset="1" stopColor="#f59e0b" /></linearGradient>
            </defs>
            <path d="M8 1h6c2 0 3 1 3 3l-5 15c-1 3-3 4-5 4H4C1 23 0 20 1 17L5 5c1-3 2-4 3-4z" fill="url(#cpA)" />
            <path d="M14 1h3c3 0 5 3 6 7l-1 9c-1 4-3 6-6 6h-7c3 0 4-2 5-4l3-9c1-4 0-8-3-9z" fill="url(#cpB)" />
          </svg>
        </TaskIcon>
        <TaskIcon on>
          <svg width="22" height="22" viewBox="0 0 22 22">
            <path d="M1 2H8L10 4H21V20H1z" fill="#f8c840" />
            <rect x="1" y="6" width="20" height="14" fill="#fddc6c" />
            <rect x="7" y="12" width="8" height="8" fill="#2b88d8" />
          </svg>
        </TaskIcon>
        <TaskIcon>
          <svg width="22" height="24" viewBox="0 0 22 24">
            <rect x="0" y="5" width="22" height="19" rx="2" fill="#f5f5f5" />
            <path d="M6 7V3a2 2 0 0 1 2-2h6a2 2 0 0 1 2 2v4" fill="none" stroke="#2b9fd8" strokeWidth="1.600" />
            <rect x="6.500" y="9" width="4" height="4" fill="#f25022" /><rect x="11.500" y="9" width="4" height="4" fill="#7fba00" />
            <rect x="6.500" y="14" width="4" height="4" fill="#00a4ef" /><rect x="11.500" y="14" width="4" height="4" fill="#ffb900" />
          </svg>
        </TaskIcon>
        <TaskIcon>
          <div className="relative w-[36px] h-[30px]">
            <svg width="24" height="24" viewBox="0 0 24 24" className="absolute left-0 top-0">
              <path d="M0 10L12 0 24 10V24H0z" fill="#2b9fd8" />
              <path d="M0 11L12 19 24 11V24H0z" fill="#8fd3f4" />
            </svg>
            <span className="absolute left-[14px] top-[10px] w-[21px] h-[21px] rounded-full bg-[#2a343a] border border-[#aaa] text-[12px] flex items-center justify-center text-white">20</span>
          </div>
        </TaskIcon>
        <TaskIcon>
          <svg width="25" height="25" viewBox="0 0 25 25">
            <circle cx="12.500" cy="12.500" r="12" fill="#1c8ed6" />
            <path d="M1 12C3 5 9 1 14 1c6 0 10 5 10 10 0 3-3 5-6 4 2-4-1-8-5-8-5 0-8 3-12 5z" fill="#5ad27e" />
            <path d="M9 13c0 5 4 8 9 7 2-.5 4-2 5-3-2 5-6 7.500-10 7.500-3 0-6-2-6-6 0-2 1-4 2-5.500z" fill="#0f5fa6" />
          </svg>
        </TaskIcon>
        <TaskIcon on>
          <svg width="25" height="25" viewBox="0 0 25 25">
            <path d="M12.500 .5A12 12 0 0 1 23 6.500H12.500a6 6 0 0 0-5.500 3.500L3.500 4a12 12 0 0 1 9-3.500z" fill="#ea4335" />
            <path d="M23 6.500A12 12 0 0 1 13 24.500l4.500-8a6 6 0 0 0 0-7z" fill="#fbbc05" />
            <path d="M3.500 4A12 12 0 0 0 13 24.500l4.500-8a6 6 0 0 1-10.500-6.500z" fill="#34a853" />
            <circle cx="12.500" cy="12.500" r="5.500" fill="white" />
            <circle cx="12.500" cy="12.500" r="4.300" fill="#4285f4" />
          </svg>
        </TaskIcon>
        <TaskIcon on>
          <svg width="24" height="24" viewBox="0 0 24 24">
            <path d="M17 1l6 3v16l-6 3L7 14l-4 3-2-1V8l2-1 4 3zM17 7l-6 5 6 5z" fill="#1b8ad3" fillRule="evenodd" />
          </svg>
        </TaskIcon>
        <TaskIcon on>
          <div className="relative w-[26px] h-[26px] rounded-full bg-[#5865f2] flex items-center justify-center">
            <svg width="16" height="12" viewBox="0 0 16 12" fill="white"><path d="M3 1c3-1 7-1 10 0 2 3 3 6 3 10l-3 1-1-2H4l-1 2-3-1c0-4 1-7 3-10z" /><circle cx="5.500" cy="6.500" r="1.500" fill="#5865f2" /><circle cx="10.500" cy="6.500" r="1.500" fill="#5865f2" /></svg>
            <span className="absolute -right-[5px] -bottom-[3px] w-[17px] h-[15px] rounded-full bg-[#e5484d] text-[10px] font-bold flex items-center justify-center">9+</span>
          </div>
        </TaskIcon>
        <TaskIcon on active>
          <Smiley size={24} stroke="#444" fill="#f5f5f5" />
        </TaskIcon>
      </div>
      <div className="ml-auto flex items-center h-[40px] text-[#e8e8e8]">
        <div className="relative w-[26px] h-[24px]">
          <svg width="26" height="18" viewBox="0 0 26 18" className="absolute left-0 bottom-[-2px]">
            <path d="M6 17a5 5 0 0 1-1-10 7 7 0 0 1 13-1 5.500 5.500 0 0 1 3 11z" fill="#a9d0f2" />
          </svg>
          <span className="absolute left-[11px] -top-[2px] w-[13px] h-[13px] rounded-full bg-[#d9302c] text-[9px] flex items-center justify-center text-white">1</span>
        </div>
        <span className="ml-[7px] text-[13px]">6°C</span>
        <span className="ml-[9px] text-[13.5px] w-[110px]">Mostly cloudy</span>
        <ChevronUp size={18} strokeWidth={1.300} className="text-[#e8e8e8] ml-[-2px]" />
        <svg width="13" height="17" viewBox="0 0 13 17" fill="none" stroke="#e8e8e8" className="ml-[9px]">
          <rect x="1" y="4.500" width="7" height="7" rx="1" /><path d="M8 7l4-2v6l-4-2M2 1.500h5M2 15.500h5" />
        </svg>
        <svg width="17" height="14" viewBox="0 0 17 14" fill="none" stroke="#e8e8e8" className="ml-[10px]">
          <path d="M1 5H4L8 1V13L4 9H1zM11 4c1 2 1 4 0 6M13.500 2c2 3 2 7 0 10" />
        </svg>
        <svg width="14" height="14" viewBox="0 0 14 14" fill="none" stroke="#e8e8e8" className="ml-[9px]">
          <path d="M1 13A12 12 0 0 1 13 1M4 13A9 9 0 0 1 13 4.500M7 13A6 6 0 0 1 13 8" /><circle cx="12" cy="12" r="1" fill="#e8e8e8" />
        </svg>
        <div className="ml-[4px] w-[66px] text-center text-[12px] leading-[18px] text-[#e8e8e8]">
          <div>14:11</div>
          <div className="whitespace-nowrap">03/12/2024</div>
        </div>
        <svg width="17" height="17" viewBox="0 0 17 17" fill="none" stroke="#e8e8e8" className="ml-[15px]">
          <path d="M1 1.500H16V13H11L8.500 15.500 6 13H1z" />
        </svg>
        <span className="ml-[19px] mr-[4px] w-px h-[40px] bg-[#4a5356]" />
      </div>
    </div>
  );
}

export default function App() {
  return (
    <div className="w-[1920px] h-[1080px] overflow-hidden flex flex-col font-['Open_Sans',sans-serif]">
      <TopChrome />
      <div className="flex-1 min-h-0 flex">
        <LeftPanel />
        <Canvas />
        <RightPanel />
      </div>
      <Taskbar />
    </div>
  );
}
